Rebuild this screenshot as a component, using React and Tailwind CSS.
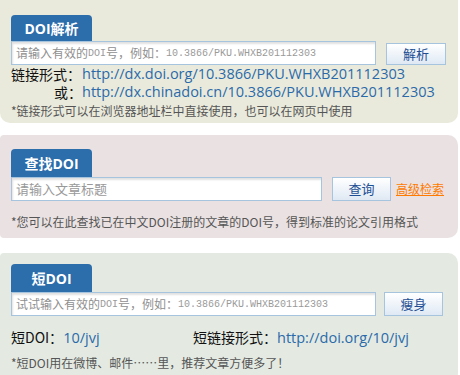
import React from "react";

const CJK = { fontFamily: '"Noto Sans CJK SC", "Noto Sans", sans-serif' };
const MONO = { fontFamily: '"Liberation Mono", "Noto Sans CJK SC", monospace' };
const LINK = { fontFamily: '"Open Sans", "Noto Sans", "Noto Sans CJK SC", sans-serif' };

function Tab({ children }) {
  return (
    <div
      className="flex w-[81px] items-center justify-center rounded-t-[4px] bg-[#2c6dab] text-[14px] font-bold text-white"
      style={{ fontFamily: '"Open Sans", "Noto Sans CJK SC", sans-serif' }}
    >
      {children}
    </div>
  );
}

function FakeInput({ width, children }) {
  return (
    <div
      className="flex h-[24px] items-center overflow-hidden whitespace-nowrap border border-[#a7c4de] bg-white pl-[4px] text-[12px] text-[#8f8f8f] shadow-[inset_1px_2px_2px_rgba(0,0,0,0.12)]"
      style={{ width }}
    >
      {children}
    </div>
  );
}

function Btn({ children, className = "" }) {
  return (
    <button
      className={
        "flex items-center justify-center border border-[#a7c4de] bg-gradient-to-b from-white to-[#dfe9f4] text-[13px] text-[#1e4f94] " +
        className
      }
      style={CJK}
    >
      {children}
    </button>
  );
}

function DoiPlaceholder({ prefix }) {
  return (
    <>
      <span style={CJK}>{prefix}</span>
      <span style={MONO} className="text-[10px] text-[#9a9a9a]">DOI</span>
      <span style={CJK}>号，例如：</span>
      <span style={MONO} className="text-[10px] text-[#9a9a9a]">10.3866/PKU.WHXB201112303</span>
    </>
  );
}

export default function App() {
  return (
    <div className="h-[375px] w-[460px] overflow-hidden bg-white" style={CJK}>
      {/* Panel 1 */}
      <div className="h-[123px] w-[458px] rounded-b-[10px] bg-[#eaeadc] px-[11px] pt-[15px]">
        <div className="flex h-[26px]">
          <Tab>DOI解析</Tab>
        </div>
        <div className="flex items-start">
          <FakeInput width="365px">
            <DoiPlaceholder prefix="请输入有效的" />
          </FakeInput>
          <Btn className="ml-[10px] mt-[2px] h-[22px] w-[60px]">解析</Btn>
        </div>
        <div className="grid grid-cols-[71px_1fr] text-[14px] leading-[18px]">
          <span className="text-[#111]">链接形式：</span>
          <span className="text-[14.5px] text-[#2a6aaa]" style={LINK}>
            http://dx.doi.org/10.3866/PKU.WHXB201112303
          </span>
          <span className="text-right text-[#111]">或：</span>
          <span className="text-[14.5px] text-[#2a6aaa]" style={LINK}>
            http://dx.chinadoi.cn/10.3866/PKU.WHXB201112303
          </span>
        </div>
        <div className="mt-[1px] text-[12px] leading-[18px] text-[#555]">
          *链接形式可以在浏览器地址栏中直接使用，也可以在网页中使用
        </div>
      </div>

      {/* Panel 2 */}
      <div className="mt-[12px] h-[103px] w-[458px] rounded-[10px] rounded-l-[4px] bg-[#eae2e2] px-[11px] pt-[14px]">
        <div className="flex h-[28px]">
          <Tab>查找DOI</Tab>
        </div>
        <div className="flex items-center">
          <FakeInput width="311px">
            <span style={CJK} className="text-[13px] text-[#999]">请输入文章标题</span>
          </FakeInput>
          <Btn className="ml-[10px] h-[24px] w-[59px]">查询</Btn>
          <a className="ml-[5px] text-[12px] text-[#ff7a00] underline" href="#">
            高级检索
          </a>
        </div>
        <div className="mt-[12px] text-[12px] leading-[18px] text-[#555]">
          *您可以在此查找已在中文DOI注册的文章的DOI号，得到标准的论文引用格式
        </div>
      </div>

      {/* Panel 3 */}
      <div className="mt-[15px] h-[130px] w-[458px] rounded-[10px] rounded-l-[4px] bg-[#e4eae2] px-[11px] pt-[11px]">
        <div className="flex h-[28px]">
          <Tab>短DOI</Tab>
        </div>
        <div className="flex items-center">
          <FakeInput width="365px">
            <DoiPlaceholder prefix="试试输入有效的" />
          </FakeInput>
          <Btn className="ml-[8px] h-[24px] w-[59px]">瘦身</Btn>
        </div>
        <div className="mt-[12px] flex text-[14px] leading-[18px] text-[#111]">
          <div className="w-[182px]">
            短DOI：<span className="text-[14.5px] text-[#2a6aaa]" style={LINK}>10/jvj</span>
          </div>
          <div>
            短链接形式：<span className="text-[14.5px] text-[#2a6aaa]" style={LINK}>http://doi.org/10/jvj</span>
          </div>
        </div>
        <div className="mt-[7px] text-[12px] leading-[18px] text-[#555]">
          *短DOI用在微博、邮件……里，推荐文章方便多了！
        </div>
      </div>
    </div>
  );
}
